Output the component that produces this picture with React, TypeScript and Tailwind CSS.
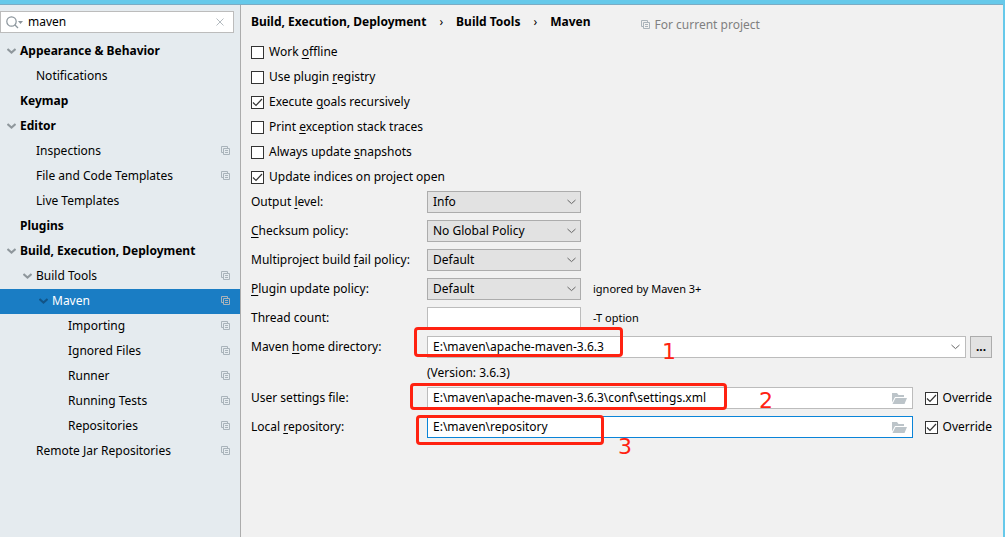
import React, { useState } from "react";

interface TreeItem {
  label: string;
  indent: string;
  bold?: boolean;
  open?: boolean;
  perProject?: boolean;
}

const treeItems: TreeItem[] = [
  { label: "Appearance & Behavior", indent: "pl-[6px]", bold: true, open: true },
  { label: "Notifications", indent: "pl-[22px]" },
  { label: "Keymap", indent: "pl-[6px]", bold: true },
  { label: "Editor", indent: "pl-[6px]", bold: true, open: true },
  { label: "Inspections", indent: "pl-[22px]", perProject: true },
  { label: "File and Code Templates", indent: "pl-[22px]", perProject: true },
  { label: "Live Templates", indent: "pl-[22px]" },
  { label: "Plugins", indent: "pl-[6px]", bold: true },
  { label: "Build, Execution, Deployment", indent: "pl-[6px]", bold: true, open: true },
  { label: "Build Tools", indent: "pl-[22px]", open: true, perProject: true },
  { label: "Maven", indent: "pl-[38px]", open: true, perProject: true },
  { label: "Importing", indent: "pl-[54px]", perProject: true },
  { label: "Ignored Files", indent: "pl-[54px]", perProject: true },
  { label: "Runner", indent: "pl-[54px]", perProject: true },
  { label: "Running Tests", indent: "pl-[54px]", perProject: true },
  { label: "Repositories", indent: "pl-[54px]", perProject: true },
  { label: "Remote Jar Repositories", indent: "pl-[22px]", perProject: true },
];

// An underscore stands before the mnemonic letter
const options = [
  { label: "Work _offline", checked: false },
  { label: "Use plugin _registry", checked: false },
  { label: "Execute _goals recursively", checked: true },
  { label: "Print _exception stack traces", checked: false },
  { label: "Always update _snapshots", checked: false },
  { label: "Update indices on project open", checked: true },
];

const policies = [
  { id: "output", label: "Output _level:", values: ["Info", "Debug", "Warn", "Error"], hint: "" },
  { id: "checksum", label: "_Checksum policy:", values: ["No Global Policy", "Fail", "Warn"], hint: "" },
  { id: "fail", label: "Multiproject build _fail policy:", values: ["Default", "Fail Fast", "Never Fail"], hint: "" },
  { id: "plugin", label: "_Plugin update policy:", values: ["Default", "Do Not Update"], hint: "ignored by Maven 3+" },
];

const Mnemonic: React.FC<{ text: string }> = ({ text }) => {
  const at = text.indexOf("_");
  if (at < 0) return <>{text}</>;
  return (
    <>
      {text.slice(0, at)}
      <u className="underline-offset-2">{text[at + 1]}</u>
      {text.slice(at + 2)}
    </>
  );
};

const CopyIcon: React.FC = () => (
  <svg width="9" height="9" viewBox="0 0 9 9" fill="none" stroke="#a9b3ba" className="shrink-0">
    <path d="M2 6.5H.5V.5h6V2" />
    <path d="M2.5 2.5h6v6h-6zM4 4.5h3M4 6.5h3" />
  </svg>
);

const Chevron: React.FC<{ className?: string }> = ({ className }) => (
  <svg width="9" height="6" viewBox="0 0 9 6" fill="none" stroke="currentColor" className={className}>
    <path d="M.5 1l4 3.6L8.5 1" />
  </svg>
);

const FolderIcon: React.FC = () => (
  <svg width="15" height="11" viewBox="0 0 15 11" fill="#bcc4c9">
    <path d="M0 0h5l1.5 2H12v2H3L0 9.500z" />
    <path d="M3.500 5H15l-2.500 6H.5z" />
  </svg>
);

const CheckBox: React.FC<{ label: string; checked: boolean; id: string }> = ({ label, checked, id }) => {
  const [value, setValue] = useState(checked);
  return (
    <div className="flex items-center gap-[5px]">
      <span className="grid shrink-0 place-items-center">
        <input
          id={id}
          type="checkbox"
          checked={value}
          onChange={() => setValue(!value)}
          className="col-start-1 row-start-1 size-[13px] appearance-none border border-[#333] bg-white"
        />
        {value && (
          <svg
            width="11"
            height="9"
            viewBox="0 0 11 9"
            fill="none"
            stroke="#333"
            strokeWidth="1.2"
            className="pointer-events-none col-start-1 row-start-1"
          >
            <path d="M1 4.500l3 3L10 1" />
          </svg>
        )}
      </span>
      <label htmlFor={id} className="whitespace-nowrap">
        <Mnemonic text={label} />
      </label>
    </div>
  );
};

const Sidebar: React.FC = () => {
  const [search, setSearch] = useState("maven");
  const [selected, setSelected] = useState("Maven");

  return (
    <aside className="w-[241px] shrink-0 border-r border-[#acacac] bg-[#e5ebef] pt-[6px]">
      <div className="mr-[6px] flex h-[22px] items-center border border-[#bcbcbc] bg-white pr-[9px] pl-[5px]">
        <svg width="17" height="13" viewBox="0 0 17 13" fill="none" stroke="#8b959c" strokeWidth="1.2" className="shrink-0">
          <circle cx="5.500" cy="5.500" r="4.700" />
          <path d="M9 9l3 3" />
          <path d="M12 5h5l-2.500 3z" fill="#8b959c" stroke="none" />
        </svg>
        <input
          type="text"
          aria-label="Search settings"
          value={search}
          onChange={(e) => setSearch(e.target.value)}
          className="ml-[5px] min-w-0 flex-1 outline-none"
        />
        <button type="button" aria-label="Clear search" onClick={() => setSearch("")}>
          <svg width="8" height="8" viewBox="0 0 8 8" fill="none" stroke="#b4bbc0">
            <path d="M.5.5l7 7M7.500.5l-7 7" />
          </svg>
        </button>
      </div>
      <ul className="mt-[6px]">
        {treeItems.map((item) => (
          <li key={item.label}>
            <button
              type="button"
              onClick={() => setSelected(item.label)}
              className={`flex h-[25px] w-full items-center pr-[10px] pb-[2px] text-left whitespace-nowrap ${item.indent} ${
                item.bold ? "font-bold" : ""
              } ${selected === item.label ? "bg-[#1a7dc4] text-white" : ""}`}
            >
              <span className={`w-[14px] shrink-0 ${selected === item.label ? "text-[#125487]" : "text-[#8f979c]"}`}>
                {item.open && <Chevron className="ml-px stroke-2" />}
              </span>
              <span className="flex-1">{item.label}</span>
              {item.perProject && <CopyIcon />}
            </button>
          </li>
        ))}
      </ul>
    </aside>
  );
};

const MavenSettings: React.FC = () => (
  <main className="min-w-0 flex-1 bg-[#f1f1f1] pr-[11px] pl-[10px]">
    <header className="flex h-[33px] items-center whitespace-nowrap">
      <h1 className="flex items-center gap-[13px] font-bold">
        <span>Build, Execution, Deployment</span>
        <span className="font-normal">›</span>
        <span>Build Tools</span>
        <span className="font-normal">›</span>
        <span>Maven</span>
      </h1>
      <div className="mt-[6px] ml-[50px] flex items-center gap-[5px] text-[#808080]">
        <CopyIcon />
        <span>For current project</span>
      </div>
    </header>

    <div className="flex flex-col gap-[5px] pt-[4px] pb-[4px]">
      {options.map((option) => (
        <CheckBox key={option.label} id={option.label} label={option.label} checked={option.checked} />
      ))}
    </div>

    <div className="flex flex-col gap-[7px]">
      {policies.map((policy) => (
        <div key={policy.id} className="flex h-[22px] items-center">
          <label htmlFor={policy.id} className="w-[176px] shrink-0 whitespace-nowrap">
            <Mnemonic text={policy.label} />
          </label>
          <div className="grid w-[154px] items-center">
            <select
              id={policy.id}
              className="col-start-1 row-start-1 h-[22px] appearance-none border border-[#acacac] bg-[#e2e2e2] px-[5px]"
            >
              {policy.values.map((value) => (
                <option key={value}>{value}</option>
              ))}
            </select>
            <Chevron className="pointer-events-none col-start-1 row-start-1 mr-[5px] justify-self-end text-[#666]" />
          </div>
          <span className="ml-3 text-[11px]">{policy.hint}</span>
        </div>
      ))}

      <div className="flex h-[22px] items-center">
        <label htmlFor="threads" className="w-[176px] shrink-0">
          Thread count:
        </label>
        <input id="threads" type="text" className="h-[22px] w-[154px] border border-[#bcbcbc] bg-white px-[5px] outline-none" />
        <span className="ml-3 text-[11px]">-T option</span>
      </div>

      <div className="flex h-[22px] items-center">
        <label htmlFor="home" className="w-[176px] shrink-0">
          Maven <Mnemonic text="_home directory:" />
        </label>
        <div className="relative flex h-[22px] flex-1 items-center border border-[#bcbcbc] bg-white px-[5px]">
          <input id="home" type="text" defaultValue="E:\maven\apache-maven-3.6.3" className="min-w-0 flex-1 outline-none" />
          <button type="button" aria-label="Show home directories">
            <Chevron className="text-[#666]" />
          </button>
          <div className="pointer-events-none absolute -top-[10px] -left-[14px] h-[30px] w-[209px] rounded-sm border-3 border-[#ff2211]" />
          <span className="pointer-events-none absolute top-[2px] left-[234px] font-['DejaVu_Sans',sans-serif] text-[22px] leading-[26px] text-[#ff2211]">
            1
          </span>
        </div>
        <button type="button" aria-label="Browse" className="ml-1 h-[22px] w-[22px] border border-[#acacac] bg-[#e2e2e2] font-bold">
          ...
        </button>
      </div>

      <p className="ml-[176px] h-[15px] leading-[15px]">(Version: 3.6.3)</p>

      <div className="flex h-[22px] items-center">
        <label htmlFor="settings" className="w-[176px] shrink-0">
          User settings file:
        </label>
        <div className="relative mr-3 flex h-[22px] flex-1 items-center border border-[#bcbcbc] bg-white px-[5px]">
          <input
            id="settings"
            type="text"
            defaultValue="E:\maven\apache-maven-3.6.3\conf\settings.xml"
            className="min-w-0 flex-1 outline-none"
          />
          <button type="button" aria-label="Choose settings file">
            <FolderIcon />
          </button>
          <div className="pointer-events-none absolute -top-[5px] -left-[18px] h-[27px] w-[317px] rounded-sm border-3 border-[#ff2211]" />
          <span className="pointer-events-none absolute top-0 left-[331px] font-['DejaVu_Sans',sans-serif] text-[22px] leading-[26px] text-[#ff2211]">
            2
          </span>
        </div>
        <CheckBox id="override-settings" label="Override" checked />
      </div>

      <div className="flex h-[22px] items-center">
        <label htmlFor="repository" className="w-[176px] shrink-0">
          Local <Mnemonic text="_repository:" />
        </label>
        <div className="relative mr-3 flex h-[22px] flex-1 items-center border border-[#0a84d8] bg-white px-[5px]">
          <input id="repository" type="text" defaultValue="E:\maven\repository" className="min-w-0 flex-1 outline-none" />
          <button type="button" aria-label="Choose local repository">
            <FolderIcon />
          </button>
          <div className="pointer-events-none absolute -top-[2px] -left-[12px] h-[30px] w-[188px] rounded-sm border-3 border-[#ff2211]" />
          <span className="pointer-events-none absolute top-[17px] left-[190px] font-['DejaVu_Sans',sans-serif] text-[22px] leading-[26px] text-[#ff2211]">
            3
          </span>
        </div>
        <CheckBox id="override-repository" label="Override" checked />
      </div>
    </div>
  </main>
);

const App: React.FC = () => (
  <div className="flex min-h-screen flex-col border-t-4 border-r-2 border-[#66c9ea] font-['Noto_Sans','Open_Sans',sans-serif] text-[12px] leading-5 text-black">
    <div className="flex flex-1 border-t border-[#7bacc4]">
      <Sidebar />
      <MavenSettings />
    </div>
  </div>
);

export default App;
